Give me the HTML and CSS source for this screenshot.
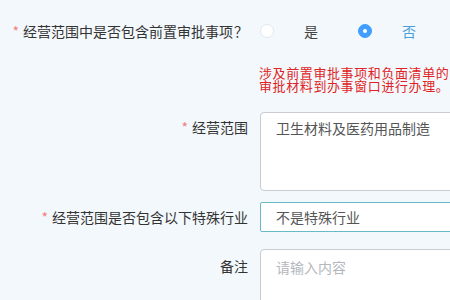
FILE: index.html
```html
<!DOCTYPE html>
<html lang="zh-CN">
<head>
<meta charset="utf-8">
<link rel="stylesheet" href="styles.css">
</head>
<body>
<form class="form">
  <div class="row row-radio">
    <label class="label"><span class="req">*</span>经营范围中是否包含前置审批事项<span class="qm">？</span></label>
    <div class="control radios">
      <span class="radio"><span class="dot"></span><span class="rtext">是</span></span>
      <span class="radio checked"><span class="dot"></span><span class="rtext">否</span></span>
    </div>
  </div>
  <div class="tip">
    <div>涉及前置审批事项和负面清单的，请携带相关</div>
    <div>审批材料到办事窗口进行办理。</div>
  </div>
  <div class="row row-area">
    <label class="label"><span class="req">*</span>经营范围</label>
    <div class="control">
      <textarea class="area" readonly>卫生材料及医药用品制造</textarea>
    </div>
  </div>
  <div class="row row-input">
    <label class="label"><span class="req">*</span>经营范围是否包含以下特殊行业</label>
    <div class="control">
      <input class="input focus" type="text" value="不是特殊行业" readonly>
    </div>
  </div>
  <div class="row row-note">
    <label class="label">备注</label>
    <div class="control">
      <textarea class="area tall" placeholder="请输入内容"></textarea>
    </div>
  </div>
</form>
</body>
</html>
```
FILE: styles.css
```css
html, body {
  margin: 0;
  padding: 0;
  background: #f3f8fc;
  overflow: hidden;
  width: 450px;
  height: 300px;
}
body {
  font-family: "Noto Sans CJK SC", "Noto Sans", sans-serif;
  font-size: 14px;
  color: #333;
}
.form {
  padding-top: 16px;
  white-space: nowrap;
}
.row {
  display: flex;
  align-items: flex-start;
}
.label {
  flex: 0 0 260px;
  box-sizing: border-box;
  padding-right: 12px;
  text-align: right;
  line-height: 30px;
  color: #333;
}
.qm {
  display: inline-block;
  width: 14px;
  text-align: center;
  margin-left: 1px;
}
.req {
  color: #f08080;
  margin-right: 4px;
}
.control {
  flex: 0 0 auto;
}
.radios {
  display: flex;
  align-items: center;
  height: 30px;
}
.radio {
  display: flex;
  align-items: center;
  margin-right: 30px;
}
.dot {
  box-sizing: border-box;
  width: 14px;
  height: 14px;
  border-radius: 50%;
  border: 1px solid #e4e7ed;
  background: #fff;
  position: relative;
}
.rtext {
  margin-left: 30px;
  color: #444;
}
.radio.checked {
  margin-left: 10px;
}
.radio.checked .dot {
  background: #409eff;
  border-color: #409eff;
}
.radio.checked .dot::after {
  content: "";
  position: absolute;
  left: 4px;
  top: 4px;
  width: 4px;
  height: 4px;
  border-radius: 50%;
  background: #fff;
}
.radio.checked .rtext {
  color: #4a9fd8;
  margin-left: 30px;
}
.tip {
  margin-top: 20px;
  margin-left: 259px;
  color: #e02424;
  font-size: 13px;
  line-height: 13px;
  letter-spacing: 0.6px;
}
.row-area {
  margin-top: 20px;
}
.area {
  display: block;
  box-sizing: border-box;
  width: 300px;
  height: 79px;
  margin: 0;
  padding: 5px 15px;
  border: 1px solid #c8cbd0;
  border-radius: 4px;
  background: #fff;
  font-family: "Noto Sans CJK SC", "Noto Sans", sans-serif;
  font-size: 14px;
  line-height: 20px;
  color: #555;
  resize: none;
  outline: none;
}
.area::placeholder {
  color: #b4b7bd;
}
.row-input {
  margin-top: 11px;
}
.input {
  display: block;
  box-sizing: border-box;
  width: 300px;
  height: 30px;
  margin: 0;
  padding: 0 15px;
  border: 1px solid #c8cbd0;
  border-radius: 2px;
  background: #fff;
  font-family: "Noto Sans CJK SC", "Noto Sans", sans-serif;
  font-size: 14px;
  line-height: 28px;
  color: #555;
  outline: none;
}
.input.focus {
  border-color: #6bb8c8;
}
.row-note {
  margin-top: 17px;
}
.row-note .label {
  line-height: 34px;
}
.area.tall {
  height: 90px;
  padding-top: 7px;
}
```
